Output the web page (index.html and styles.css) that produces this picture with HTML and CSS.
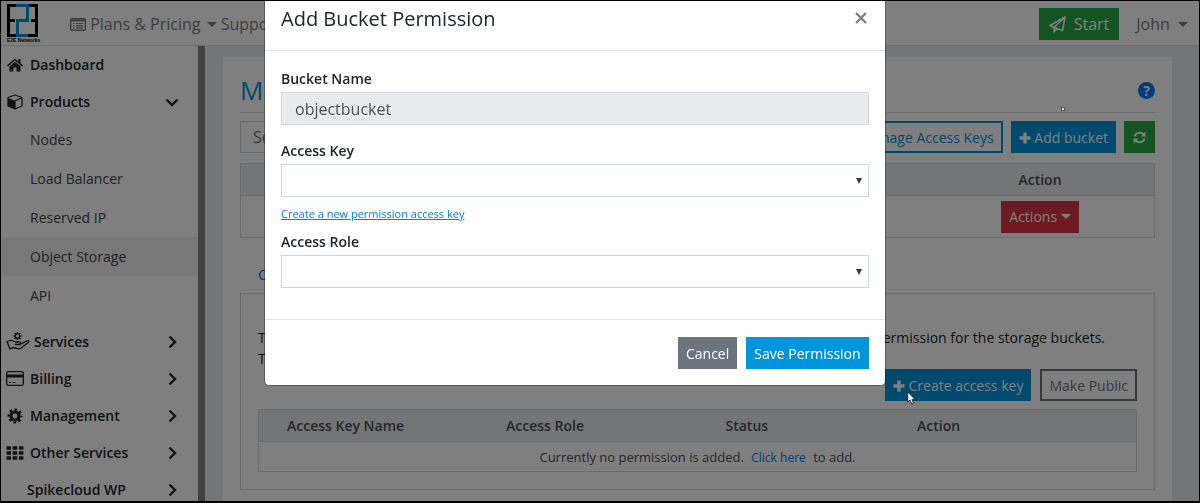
FILE: index.html
```html
<!DOCTYPE html>
<html lang="en">
<head>
  <meta charset="UTF-8" />
  <meta name="viewport" content="width=device-width, initial-scale=1.0" />
  <title>Manage Object Storage</title>
  <link rel="stylesheet" href="styles.css">
</head>
<body>
  <header class="topbar">
    <a class="logo" href="#" aria-label="E2E Networks">
      <svg width="31" height="33" viewBox="0 0 31 33">
        <g fill="none" stroke-width="3">
          <path d="M10 1.5H1.5V31.5H10M2 16.5H8M22 1.5H29.5V31.5H20M24 16.5H29" stroke="#000"/>
          <path d="M9 1.5H20.5V16.5H10.500V31.5H21" stroke="#0095da"/>
        </g>
      </svg>
      <span class="logo-text">E2E Networks</span>
    </a>
    <nav class="topnav">
      <a class="plans" href="#">
        <svg width="16" height="13" viewBox="0 0 16 13" fill="none" stroke="currentColor">
          <rect x=".7" y=".7" width="14.600" height="11.600" rx="1.200" stroke-width="1.400"/>
          <path d="M1 2.500H15" stroke-width="2"/>
          <path d="M3 5.500H4.500M6 5.500H13M3 7.700H4.500M6 7.700H13M3 9.900H4.500M6 9.900H13" stroke-width="1.200"/>
        </svg>
        Plans &amp; Pricing <span class="caret"></span>
      </a>
      <a href="#">Support</a>
    </nav>
    <button class="btn green start">
      <svg width="17" height="17" viewBox="0 0 17 17" fill="none" stroke="currentColor" stroke-width="1.500" stroke-linejoin="round">
        <path d="M16 1L1 9.500L5 11.500L13.500 14.500ZM16 1L5 11.500V16L8 12.500"/>
      </svg>
      Start
    </button>
    <a class="user" href="#">John <span class="caret"></span></a>
  </header>

  <div class="layout">
    <aside class="sidebar">
      <a class="item" href="#">
        <svg class="icon" width="16" height="14" viewBox="0 0 16 14" fill="currentColor">
          <path d="M8 .5L0 7.300L1 8.400L8 2.500L15 8.400L16 7.300L13.500 5.200V1H11.500V3.500Z"/>
          <path d="M8 3.700L2.500 8.300V13.500H6.500V9.500H9.500V13.500H13.500V8.300Z"/>
        </svg>
        Dashboard
      </a>
      <a class="item" href="#">
        <svg class="icon" width="16" height="16" viewBox="0 0 16 16">
          <path d="M8 1L15 3.500V12L8 15L1 12V3.500Z" fill="none" stroke="currentColor" stroke-width="1.300" stroke-linejoin="round"/>
          <path d="M1 4L8 6.800V15L1 12Z" fill="currentColor"/>
          <path d="M8 6.800L15 3.800M8 6.800V15" stroke="currentColor" stroke-width="1.200"/>
        </svg>
        Products
        <svg class="chevron" width="14" height="14" viewBox="0 0 14 14"><path d="M1.500 4.500L7 10L12.500 4.500"/></svg>
      </a>
      <div class="submenu">
        <a href="#">Nodes</a>
        <a href="#">Load Balancer</a>
        <a href="#">Reserved IP</a>
        <a class="active" href="#">Object Storage</a>
        <a href="#">API</a>
      </div>
      <a class="item wide" href="#">
        <svg class="icon" width="24" height="19" viewBox="0 0 24 19" fill="none" stroke="currentColor" stroke-width="1.300" stroke-linejoin="round" stroke-linecap="round">
          <circle cx="11.500" cy="4" r="2.300"/>
          <path d="M11.500 .5V1.500M11.500 6.500V7.500M8 4H9M14 4H15M9 1.500L9.800 2.300M14 1.500L13.200 2.300M9 6.500L9.800 5.700M14 6.500L13.200 5.700" stroke-width="1.500"/>
          <path d="M1 9.500L4.500 8.500C7 8 8 10 9.500 10H13C15 10 15 12.500 13 12.500H9.500M14.800 12L21 8.800C23 8.200 23.500 9.800 22 10.800L15 16C14 16.700 12.500 17 11 16.500L7 15.500L4 17L1 9.500"/>
        </svg>
        Services
        <svg class="chevron" width="14" height="14" viewBox="0 0 14 14"><path d="M4.500 1.500L10 7L4.500 12.500"/></svg>
      </a>
      <a class="item" href="#">
        <svg class="icon" width="18" height="15" viewBox="0 0 18 15">
          <rect x=".7" y=".7" width="16.600" height="13.600" rx="1.500" fill="none" stroke="currentColor" stroke-width="1.300"/>
          <path d="M1 5H17" stroke="currentColor" stroke-width="3"/>
          <path d="M3 11.500H5M6.500 11.500H9.500" stroke="currentColor"/>
        </svg>
        Billing
        <svg class="chevron" width="14" height="14" viewBox="0 0 14 14"><path d="M4.500 1.500L10 7L4.500 12.500"/></svg>
      </a>
      <a class="item" href="#">
        <svg class="icon" width="16" height="16" viewBox="0 0 16 16" fill="none" stroke="currentColor">
          <circle cx="8" cy="8" r="4" stroke-width="3.200"/>
          <circle cx="8" cy="8" r="6.300" stroke-width="2.400" stroke-dasharray="2.500 2.448" stroke-dashoffset="1.250"/>
        </svg>
        Management
        <svg class="chevron" width="14" height="14" viewBox="0 0 14 14"><path d="M4.500 1.500L10 7L4.500 12.500"/></svg>
      </a>
      <a class="item" href="#">
        <svg class="icon" width="18" height="14" viewBox="0 0 18 14" stroke="currentColor" stroke-width="3.400">
          <path d="M.5 2H5M6.700 2H11.200M12.900 2H17.400M.5 7H5M6.700 7H11.200M12.900 7H17.400M.5 12H5M6.700 12H11.200M12.900 12H17.400"/>
        </svg>
        Other Services
        <svg class="chevron" width="14" height="14" viewBox="0 0 14 14"><path d="M4.500 1.500L10 7L4.500 12.500"/></svg>
      </a>
      <a class="item plain" href="#">
        Spikecloud WP
        <svg class="chevron" width="14" height="14" viewBox="0 0 14 14"><path d="M4.500 1.500L10 7L4.500 12.500"/></svg>
      </a>
    </aside>

    <main class="main">
      <section class="card">
        <div class="card-head">
          <h1>Manage Object Storage</h1>
          <a class="help" href="#" aria-label="Help">?</a>
        </div>

        <div class="toolbar">
          <input class="search" type="text" placeholder="Search" aria-label="Search">
          <button class="btn outline-blue">Manage Access Keys</button>
          <button class="btn blue">
            <svg width="12" height="12" viewBox="0 0 12 12" stroke="currentColor" stroke-width="3.400"><path d="M6 .5V11.500M.5 6H11.500"/></svg>
            Add bucket
          </button>
          <button class="btn green refresh" aria-label="Refresh">
            <svg width="13" height="13" viewBox="0 0 13 13">
              <path d="M1.500 5.500C2.500 1.500 8 .5 10.700 3.500M11.500 7.500C10.500 11.500 5 12.500 2.300 9.500" fill="none" stroke="currentColor" stroke-width="2"/>
              <path d="M12.500 .5V5.500H7.500ZM.5 12.500V7.500H5.500Z" fill="currentColor"/>
            </svg>
          </button>
        </div>

        <table class="table buckets">
          <thead>
            <tr><th>Name</th><th>Created</th><th>Size</th><th>Action</th></tr>
          </thead>
          <tbody>
            <tr>
              <td></td><td></td><td></td>
              <td><button class="btn red">Actions <span class="caret"></span></button></td>
            </tr>
          </tbody>
        </table>

        <a class="tab" href="#">Collaborators</a>

        <div class="panel">
          <div class="info">
            <p><span>The access keys</span><span>permission for the storage buckets.</span></p>
            <p><span>The bucket</span></p>
          </div>
          <div class="panel-actions">
            <button class="btn blue">
              <svg width="12" height="12" viewBox="0 0 12 12" stroke="currentColor" stroke-width="3.400"><path d="M6 .5V11.500M.5 6H11.500"/></svg>
              Create access key
            </button>
            <button class="btn outline-gray">Make Public</button>
          </div>
          <table class="table permissions">
            <thead>
              <tr><th>Access Key Name</th><th>Access Role</th><th>Status</th><th>Action</th></tr>
            </thead>
            <tbody>
              <tr><td colspan="4">Currently no permission is added. <a href="#">Click here</a> to add.</td></tr>
            </tbody>
          </table>
        </div>
      </section>
    </main>
  </div>

  <div class="backdrop"></div>

  <form class="modal" role="dialog" aria-labelledby="modal-title">
    <div class="modal-header">
      <h2 id="modal-title">Add Bucket Permission</h2>
      <button class="close" type="button" aria-label="Close">
        <svg width="12" height="12" viewBox="0 0 12 12" stroke="currentColor" stroke-width="2.400"><path d="M1 1L11 11M11 1L1 11"/></svg>
      </button>
    </div>
    <div class="modal-body">
      <div class="form-group">
        <label for="bucket">Bucket Name</label>
        <input id="bucket" class="field" type="text" value="objectbucket" readonly>
      </div>
      <div class="form-group with-link">
        <label for="key">Access Key</label>
        <div class="select">
          <select id="key" class="field"><option></option></select>
        </div>
        <a class="new-key" href="#">Create a new permission access key</a>
      </div>
      <div class="form-group">
        <label for="role">Access Role</label>
        <div class="select">
          <select id="role" class="field"><option></option></select>
        </div>
      </div>
    </div>
    <div class="modal-footer">
      <button class="btn gray" type="button">Cancel</button>
      <button class="btn blue" type="submit">Save Permission</button>
    </div>
  </form>

  <span class="spark"></span>
  <svg class="cursor" width="9" height="14" viewBox="0 0 9 14"><path d="M.7 .8V11L3 9L4.700 13L6.500 12.200L4.900 8.400H8Z" fill="#fff" stroke="#111" stroke-width=".8"/></svg>
  <div class="frame"></div>
</body>
</html>
```
FILE: styles.css
```css
* {
  margin: 0;
  padding: 0;
  box-sizing: border-box;
}
body {
  font-family: "Open Sans", "Noto Sans", sans-serif;
  font-size: 14px;
  color: #212529;
  background: #e8ebef;
  height: 100vh;
  overflow: hidden;
  display: flex;
  flex-direction: column;
}
a {
  color: #007bff;
  text-decoration: none;
}
button, input, select {
  font: inherit;
}
.caret {
  display: inline-block;
  border: 5px solid transparent;
  border-top-color: currentColor;
  border-bottom: 0;
  vertical-align: 3px;
}

/* top bar */
.topbar {
  display: flex;
  align-items: center;
  height: 46px;
  flex-shrink: 0;
  padding: 2px 12px 0 7px;
  background: #fff;
  border-bottom: 1px solid #dcdfe3;
  font-size: 16px;
}
.topbar a {
  color: #7a7a7a;
}
.logo {
  width: 63px;
}
.logo svg {
  display: block;
}
.topbar .logo-text {
  display: block;
  font-family: "Liberation Sans", sans-serif;
  font-size: 5px;
  line-height: 6px;
  font-weight: 700;
  color: #000;
}
.topnav {
  display: flex;
  flex: 1;
}
.plans svg {
  vertical-align: -1px;
}
.plans .caret {
  margin: 0 4px 0 2px;
}
.user {
  margin-left: 17px;
}
.user .caret {
  margin-left: 4px;
}

.btn {
  height: 32px;
  padding: 0 7px;
  border: 1px solid transparent;
  font-size: 14px;
  color: #fff;
  white-space: nowrap;
}
.btn svg {
  vertical-align: -1px;
}
.blue {
  background: #0095da;
}
.green {
  background: #28a745;
}
.red {
  background: #dc3545;
}
.gray {
  background: #6c757d;
}
.outline-blue {
  background: #fff;
  border: 2px solid #0095da;
  color: #0095da;
}
.outline-gray {
  background: #fff;
  border: 2px solid #6c757d;
  color: #6c757d;
}
.start {
  padding: 0 9px;
  font-size: 16px;
}
.start svg {
  margin-right: 4px;
  vertical-align: -3px;
}

/* sidebar */
.layout {
  display: flex;
  flex: 1;
  min-height: 0;
}
.sidebar {
  width: 205px;
  flex-shrink: 0;
  padding-left: 2px;
  background: #fff;
  border-right: 7px solid #848484;
  overflow: hidden;
}
.item {
  display: flex;
  align-items: center;
  height: 37px;
  padding: 0 19px 0 28px;
  font-weight: 600;
  color: #212529;
}
.item .icon {
  flex-shrink: 0;
  width: 24px;
  margin: 0 3px 0 -27px;
}
.wide {
  padding-left: 32px;
}
.wide .icon {
  margin: 0 4px 0 -28px;
}
.plain {
  padding-left: 25px;
}
.chevron {
  margin-left: auto;
  fill: none;
  stroke: currentColor;
  stroke-width: 2.400;
}
.submenu {
  margin-bottom: 8px;
}
.submenu a {
  display: block;
  padding-left: 28px;
  line-height: 39px;
  color: #444;
}
.submenu .active {
  background: #f0f0f0;
}

/* content */
.main {
  flex: 1;
  min-width: 0;
  padding: 11px 28px 0 18px;
}
.card {
  height: 100%;
  padding: 13px 17px 0;
  background: #fff;
}
.card-head {
  display: flex;
  align-items: center;
  justify-content: space-between;
  padding-bottom: 2px;
  margin-bottom: 8px;
  border-bottom: 1px solid #d8dbdf;
}
h1 {
  font-size: 26px;
  line-height: 40px;
  font-weight: 500;
  color: #0095da;
}
.help {
  width: 17px;
  height: 17px;
  border-radius: 50%;
  background: #007bff;
  color: #fff;
  font-size: 14px;
  line-height: 17px;
  font-weight: 700;
  text-align: center;
}
.toolbar {
  display: flex;
  gap: 8px;
  margin-bottom: 10px;
}
.search {
  width: 240px;
  padding: 0 12px;
  border: 1px solid #ced4da;
  margin-right: auto;
  font-size: 16px;
}
.refresh {
  width: 31px;
}
.table {
  width: 100%;
  table-layout: fixed;
  border-collapse: collapse;
  border: 1px solid #d3d7db;
  text-align: center;
  color: #495057;
}
.table th {
  height: 32px;
  background: #e8ebef;
  border-bottom: 1px solid #d3d7db;
  font-weight: 600;
}
.buckets td {
  height: 42px;
  background: #fafcfb;
}
.tab {
  display: block;
  margin: 27px 18px 8px;
  line-height: 20px;
}
.panel {
  padding: 33px 17px 17px;
  border: 1px solid #d3d7db;
}
.info {
  padding-right: 32px;
  line-height: 21px;
}
.info p {
  display: flex;
  justify-content: space-between;
}
.panel-actions {
  display: flex;
  justify-content: flex-end;
  gap: 9px;
  margin-bottom: 8px;
}
.permissions th {
  padding-left: 28px;
  text-align: left;
}
.permissions th:last-child {
  padding-left: 0;
}
.permissions td {
  height: 30px;
  font-size: 13px;
}
.permissions a {
  margin: 0 4px;
  font-size: 12px;
}

/* dialog */
.backdrop {
  position: fixed;
  inset: 0;
  background: rgba(0, 0, 0, 0.5);
}
.modal {
  position: fixed;
  top: 0;
  left: 22%;
  right: 26.2%;
  background: #fff;
  background-clip: padding-box;
  border: 1px solid rgba(0, 0, 0, 0.3);
  border-top: 0;
  border-radius: 0 0 5px 5px;
}
.modal-header {
  display: flex;
  justify-content: space-between;
  height: 51px;
  padding: 4px 16px 0;
  border-bottom: 1px solid #dee2e6;
}
h2 {
  font-size: 20px;
  line-height: 30px;
  font-weight: 400;
}
.close {
  height: 28px;
  border: 0;
  padding: 0 2px;
  background: none;
  color: #7f7f7f;
}
.modal-body {
  padding: 17px 16px 16px;
}
.form-group {
  margin-bottom: 15px;
}
.with-link {
  margin-bottom: 8px;
}
label {
  display: block;
  margin-bottom: 2px;
  line-height: 22px;
  font-weight: 600;
}
.field {
  display: block;
  width: 100%;
  height: 33px;
  padding: 0 13px;
  border: 1px solid #ced4da;
  background: #fff;
  color: #495057;
  font-size: 16px;
  appearance: none;
}
.field[readonly] {
  background: #e9ecef;
}
.select {
  position: relative;
}
.select::after {
  content: "";
  position: absolute;
  top: 14px;
  right: 7px;
  border: 3px solid transparent;
  border-top: 6px solid #343a40;
  border-bottom: 0;
}
.new-key {
  display: block;
  margin-top: 8px;
  font-size: 11px;
  line-height: 18px;
  text-decoration: underline;
}
.modal-footer {
  display: flex;
  justify-content: flex-end;
  gap: 9px;
  padding: 17px 16px 16px;
  border-top: 1px solid #dee2e6;
}

.cursor {
  position: fixed;
  top: 391px;
  left: 907px;
}
.spark {
  position: fixed;
  top: 107px;
  left: 1061px;
  width: 4px;
  height: 4px;
  border: 1px solid #555;
  background: #ddd;
}
.frame {
  position: fixed;
  inset: 0;
  border: solid #000;
  border-width: 1px 1px 2px;
  pointer-events: none;
}
```
